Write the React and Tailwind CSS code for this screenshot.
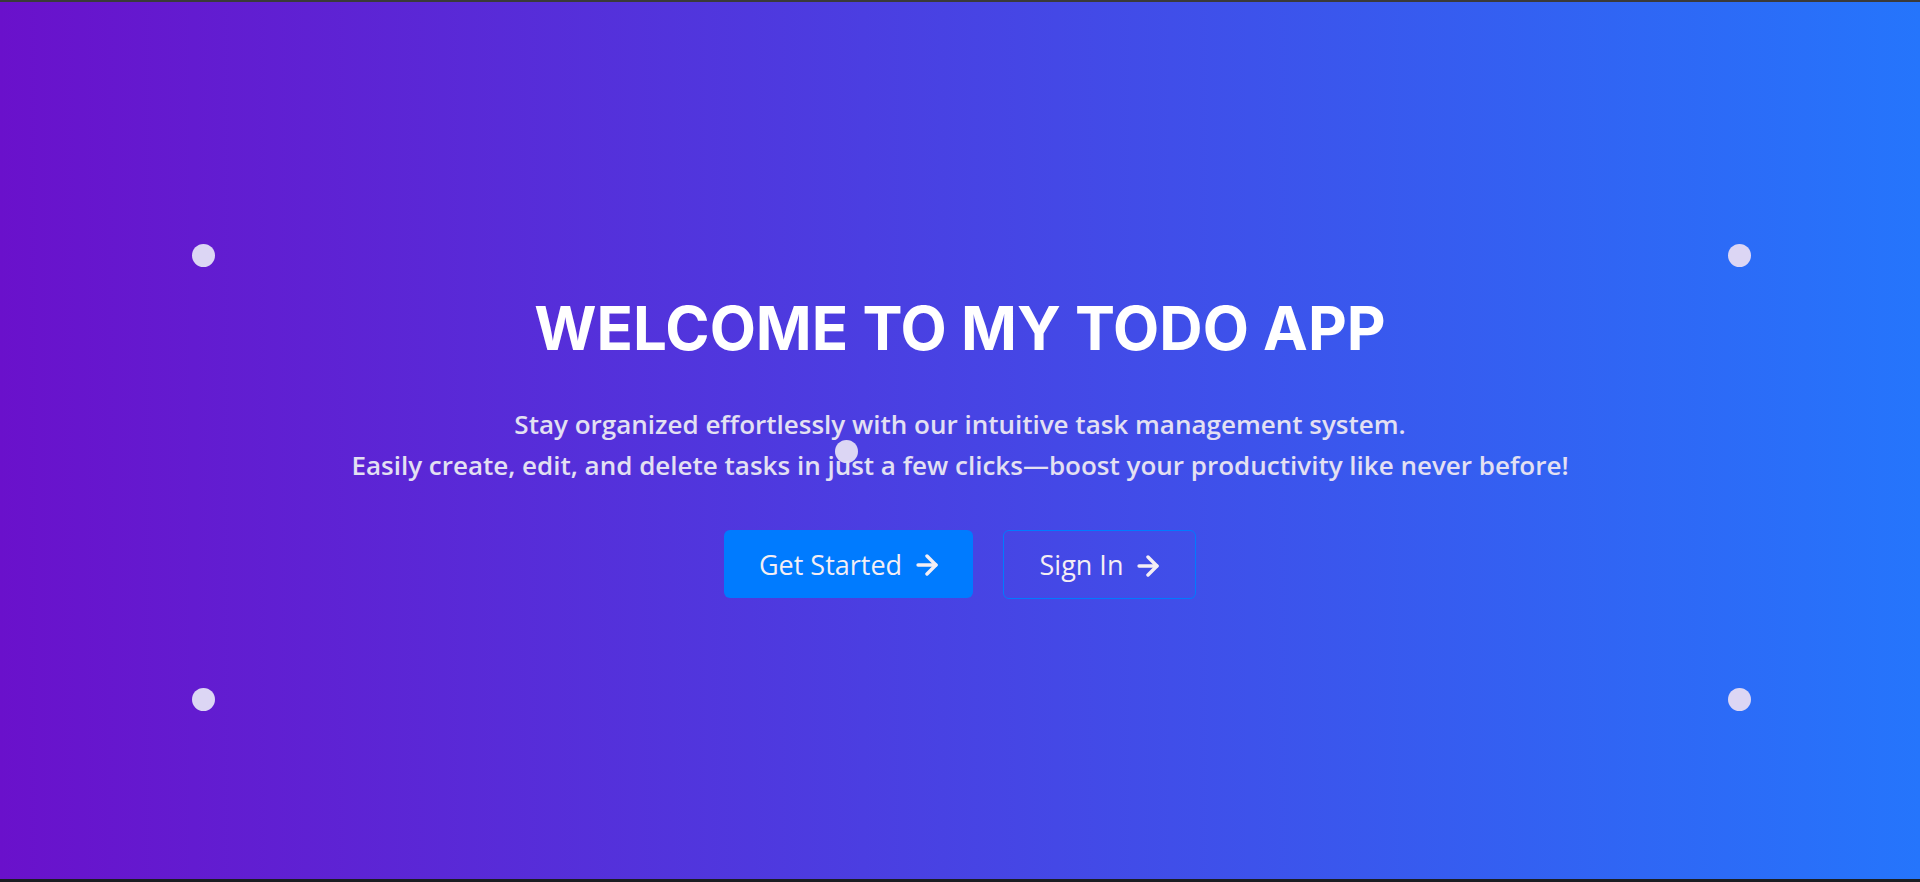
import React from 'react'

const dots = [
  'left-[192px] top-[242px]',
  'left-[1728px] top-[242px]',
  'left-[192px] top-[686px]',
  'left-[1728px] top-[686px]',
  'left-[835px] top-[438px]',
]

function Arrow() {
  return (
    <svg width="22" height="22" viewBox="4 4 16 16" fill="none" stroke="currentColor" strokeWidth="2.5" strokeLinecap="round" strokeLinejoin="round">
      <path d="M5.5 12h13" />
      <path d="m12 5.5 6.5 6.5-6.5 6.5" />
    </svg>
  )
}

function Hero() {
  return (
    <section className="relative flex-1 overflow-hidden bg-[linear-gradient(to_right,#6a11cb,#2575fc)] flex flex-col items-center justify-center">
      {dots.map((pos, i) => (
        <span
          key={i}
          className={`absolute ${pos} w-[23px] h-[23px] rounded-full bg-[#dcd6f4]`}
        />
      ))}

      <div className="relative pt-[15px] flex flex-col items-center text-center">
        <h1 className="font-['Inter',sans-serif] font-bold text-[60px] leading-none text-white">
          WELCOME TO MY TODO APP
        </h1>

        <p className="mt-[46px] font-['Open_Sans',sans-serif] font-semibold text-[26px] leading-[41px] text-[#e3e0f2]">
          Stay organized effortlessly with our intuitive task management system.
          <br />
          Easily create, edit, and delete tasks in just a few clicks—boost your productivity like never before!
        </p>

        <div className="mt-[44px] flex gap-[30px]">
          <button className="h-[68px] w-[249px] pt-[3px] rounded-md bg-[#007bff] flex items-center justify-center gap-[14px] font-['Open_Sans',sans-serif] text-[27px] text-[#f4eef4]">
            Get Started
            <Arrow />
          </button>
          <button className="h-[69px] w-[193px] pt-[3px] rounded-md border border-[#007bff] flex items-center justify-center gap-[14px] font-['Open_Sans',sans-serif] text-[27px] text-[#f4eef4]">
            Sign In
            <Arrow />
          </button>
        </div>
      </div>
    </section>
  )
}

export default function App() {
  return (
    <div className="h-[882px] flex flex-col bg-[#1b1e23]">
      <div className="h-[2px] bg-[#3a3a3a]" />
      <Hero />
      <div className="h-[3px] bg-[#1b1e23]" />
    </div>
  )
}
